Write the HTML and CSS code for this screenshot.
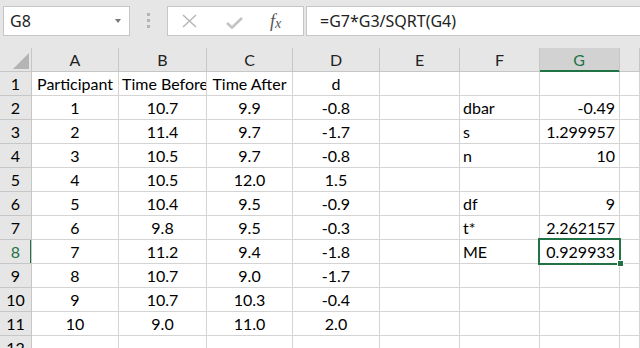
FILE: index.html
```html
<!DOCTYPE html>
<html lang="en">
<head>
  <meta charset="UTF-8" />
  <title>Paired t - margin of error</title>
  <link rel="stylesheet" href="styles.css">
</head>
<body>

  <!-- formula bar -->
  <div class="formula-bar">
    <div class="name-box">
      <span>G8</span>
      <span class="arrow"></span>
    </div>
    <div class="grip"><i></i><i></i><i></i></div>
    <div class="fx-box">
      <svg class="icon-x" width="15" height="14" viewBox="0 0 15 14">
        <path d="M1 1 L14 13 M14 1 L1 13" stroke="#b9b9b9" stroke-width="1.6" fill="none"/>
      </svg>
      <svg class="icon-check" width="17" height="12" viewBox="0 0 17 12">
        <path d="M1 6 L6 10.5 L16 1" stroke="#c3c3c3" stroke-width="2.6" fill="none"/>
      </svg>
      <span class="fx">f<sub>x</sub></span>
    </div>
    <div class="formula">=G7*G3/SQRT(G4)</div>
  </div>

  <!-- sheet -->
  <div class="sheet">
    <div class="row head">
      <div class="corner"><span class="tri"></span></div>
      <div>A</div><div>B</div><div>C</div><div>D</div><div>E</div><div>F</div><div class="hd-sel">G</div><div></div>
    </div>
    <div class="row">
      <div>1</div><div>Participant</div><div>Time Before</div><div>Time After</div><div>d</div><div></div><div></div><div></div><div></div>
    </div>
    <div class="row">
      <div>2</div><div>1</div><div>10.7</div><div>9.9</div><div>-0.8</div><div></div><div>dbar</div><div>-0.49</div><div></div>
    </div>
    <div class="row">
      <div>3</div><div>2</div><div>11.4</div><div>9.7</div><div>-1.7</div><div></div><div>s</div><div>1.299957</div><div></div>
    </div>
    <div class="row">
      <div>4</div><div>3</div><div>10.5</div><div>9.7</div><div>-0.8</div><div></div><div>n</div><div>10</div><div></div>
    </div>
    <div class="row">
      <div>5</div><div>4</div><div>10.5</div><div>12.0</div><div>1.5</div><div></div><div></div><div></div><div></div>
    </div>
    <div class="row">
      <div>6</div><div>5</div><div>10.4</div><div>9.5</div><div>-0.9</div><div></div><div>df</div><div>9</div><div></div>
    </div>
    <div class="row">
      <div>7</div><div>6</div><div>9.8</div><div>9.5</div><div>-0.3</div><div></div><div>t*</div><div>2.262157</div><div></div>
    </div>
    <div class="row">
      <div class="rh-sel">8</div><div>7</div><div>11.2</div><div>9.4</div><div>-1.8</div><div></div><div>ME</div><div class="sel">0.929933</div><div></div>
    </div>
    <div class="row">
      <div>9</div><div>8</div><div>10.7</div><div>9.0</div><div>-1.7</div><div></div><div></div><div></div><div></div>
    </div>
    <div class="row">
      <div>10</div><div>9</div><div>10.7</div><div>10.3</div><div>-0.4</div><div></div><div></div><div></div><div></div>
    </div>
    <div class="row">
      <div>11</div><div>10</div><div>9.0</div><div>11.0</div><div>2.0</div><div></div><div></div><div></div><div></div>
    </div>
    <div class="row">
      <div>12</div><div></div><div></div><div></div><div></div><div></div><div></div><div></div><div></div>
    </div>
  </div>

</body>
</html>
```

FILE: styles.css
```css
body {
  margin: 0;
  background: #fff;
  font-family: 'Lato', sans-serif;
  color: #000;
  height: 348px;
  overflow: hidden;
}

/* ---- formula bar ---- */
.formula-bar {
  display: flex;
  align-items: flex-start;
  height: 48px;
  box-sizing: border-box;
  padding-top: 6px;
  background: #e6e6e6;
  font-family: 'Noto Sans', sans-serif;
  font-size: 16px;
  color: #222;
}

.name-box {
  margin-left: 3px;
  width: 127px;
  height: 30px;
  box-sizing: border-box;
  border: 1px solid #c6c6c6;
  background: #fff;
  display: flex;
  align-items: center;
  justify-content: space-between;
  padding: 0 8px 0 6px;
}

.name-box .arrow {
  width: 0;
  height: 0;
  border-left: 3.5px solid transparent;
  border-right: 3.5px solid transparent;
  border-top: 4px solid #777;
}

.grip {
  width: 37px;
  display: flex;
  flex-direction: column;
  align-items: center;
  gap: 3px;
  padding-top: 7px;
}

.grip i {
  width: 3px;
  height: 3px;
  background: #b4b4b4;
}

.fx-box {
  width: 137px;
  height: 30px;
  box-sizing: border-box;
  border: 1px solid #c6c6c6;
  background: #fff;
  display: flex;
  align-items: center;
}

.icon-x {
  margin-left: 14px;
}

.icon-check {
  margin-left: 29px;
  margin-top: 3px;
}

.fx {
  margin-left: 27px;
  font-family: 'Liberation Serif', serif;
  font-style: italic;
  font-size: 18px;
  color: #555;
}

.fx sub {
  font-size: 14px;
  vertical-align: -1px;
}

.formula {
  flex: 1;
  margin-left: 2px;
  height: 30px;
  box-sizing: border-box;
  border: 1px solid #c6c6c6;
  border-right: none;
  background: #fff;
  padding-left: 13px;
  line-height: 28px;
}

/* ---- grid ---- */
.row {
  display: grid;
  grid-template-columns: 32px 87px 88px 86px 87px 80px 80px 80px 1fr;
  height: 24px;
}

.row > div {
  box-sizing: border-box;
  border-right: 1px solid #d4d4d4;
  border-bottom: 1px solid #d4d4d4;
  padding: 0 3px;
  font-size: 16px;
  line-height: 23px;
  white-space: nowrap;
  overflow: hidden;
}

.row > div:nth-child(2),
.row > div:nth-child(3),
.row > div:nth-child(4),
.row > div:nth-child(5) {
  text-align: center;
}

.row > div:nth-child(8) {
  text-align: right;
  padding-right: 4px;
}

.row > div:first-child {
  background: #e6e6e6;
  border-color: #c6c6c6;
  text-align: center;
  padding: 0;
}

.head > div {
  background: #e6e6e6;
  border-color: #c6c6c6;
  text-align: center !important;
  color: #222;
}

.corner {
  display: flex;
  align-items: flex-end;
  justify-content: flex-end;
  padding: 0 2px 2px 0 !important;
}

.corner .tri {
  width: 0;
  height: 0;
  border-left: 16px solid transparent;
  border-bottom: 16px solid #b4b4b4;
}

.head .hd-sel {
  background: #d2d2d2;
  color: #217346;
  border-bottom-color: #217346;
  box-shadow: inset 0 -1px #217346;
}

.row .rh-sel {
  background: #d2d2d2;
  color: #217346;
  border-right-color: #217346;
  box-shadow: inset -1px 0 #217346;
}

.row .sel {
  position: relative;
  overflow: visible;
}

.sel::before {
  content: "";
  position: absolute;
  left: -2px;
  top: -2px;
  right: -2px;
  bottom: -2px;
  border: 2px solid #217346;
}

.sel::after {
  content: "";
  position: absolute;
  right: -5px;
  bottom: -4px;
  width: 5px;
  height: 5px;
  background: #217346;
  border: 1px solid #fff;
}
```
